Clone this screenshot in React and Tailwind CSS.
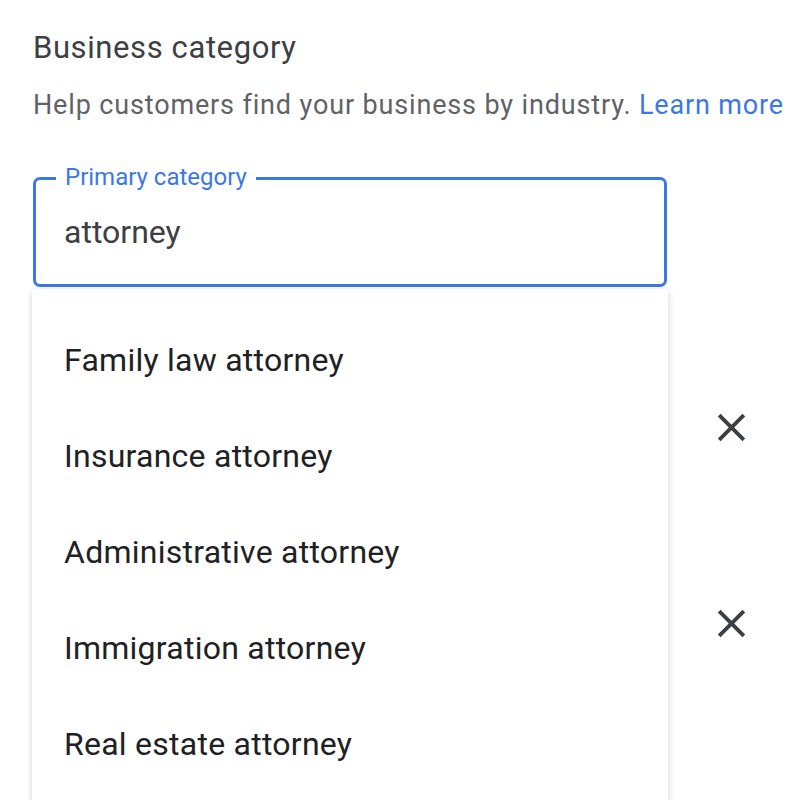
const options = [
  "Family law attorney",
  "Insurance attorney",
  "Administrative attorney",
  "Immigration attorney",
  "Real estate attorney",
];

function CloseIcon() {
  return (
    <svg width="47" height="47" viewBox="0 0 24 24" fill="#3c4043">
      <path d="M19 6.41L17.59 5 12 10.59 6.41 5 5 6.41 10.59 12 5 17.59 6.41 19 12 13.41 17.59 19 19 17.59 13.41 12z" />
    </svg>
  );
}

export default function App() {
  return (
    <div className="w-[794px] h-[800px] overflow-hidden bg-white font-['Roboto',sans-serif]">
      <div className="pl-[33px] pt-[28px]">
        <h2 className="text-[31px] leading-[40px] tracking-[0.6px] text-[#3c4043]">Business category</h2>
        <p className="mt-[19px] text-[27px] leading-[36px] tracking-[0.85px] text-[#5f6368] whitespace-nowrap">
          Help customers find your business by industry.{" "}
          <a className="text-[#3b78e7]">Learn more</a>
        </p>

        <div className="relative mt-[54px] w-[634px]">
          {/* input */}
          <div className="relative h-[110px] rounded-[7px] border-[3px] border-[#3b78e7] pl-[28px] flex items-center">
            <span className="absolute -top-[15px] left-[20px] bg-white px-[9px] text-[24px] leading-[24px] text-[#3b78e7]">
              Primary category
            </span>
            <span className="text-[32px] text-[#3c4043]">attorney</span>
          </div>

          {/* dropdown */}
          <div className="absolute left-[-1px] top-[112px] w-[636px] rounded-t-[4px] bg-white shadow-[0_2px_6px_rgba(60,64,67,0.25)] pt-[23px] pb-[40px] z-10">
            {options.map((o) => (
              <div key={o} className="h-[96px] flex items-center pl-[32px] text-[32px] tracking-[0.25px] text-[#202124] whitespace-nowrap">
                {o}
              </div>
            ))}
          </div>

          {/* rows behind the dropdown */}
          <div className="pl-[675px] pt-[117px] flex flex-col gap-[149px]">
            <CloseIcon />
            <CloseIcon />
          </div>
        </div>
      </div>
    </div>
  );
}
